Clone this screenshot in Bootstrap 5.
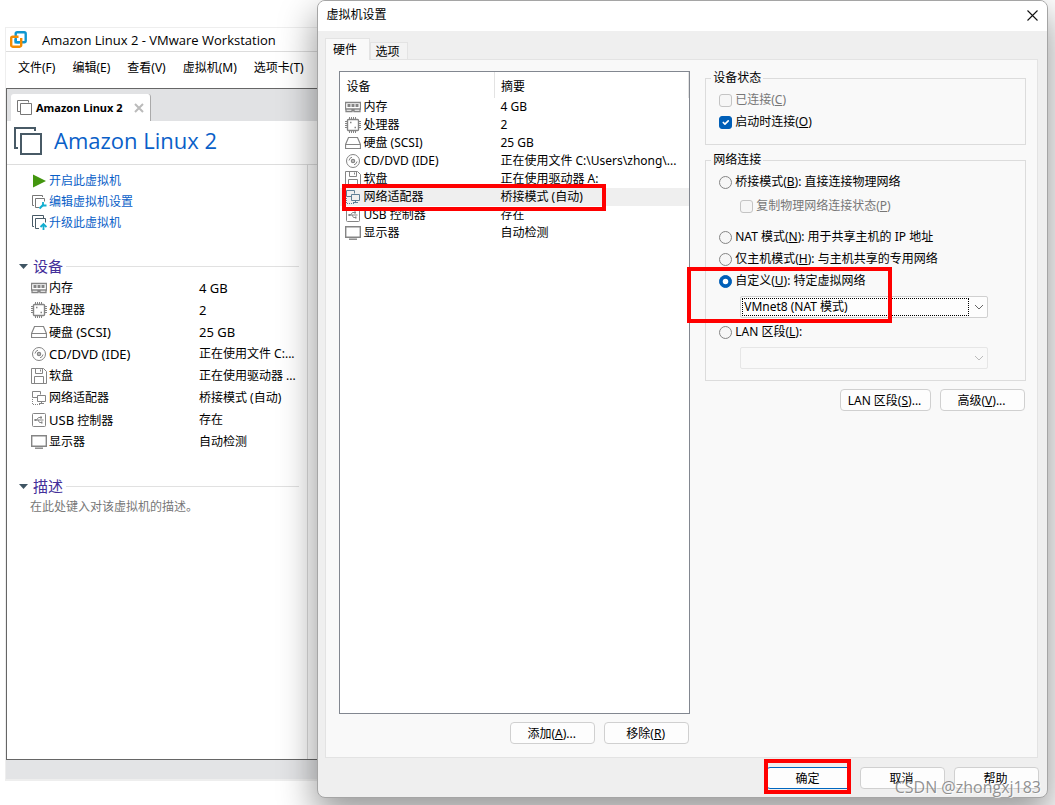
<!DOCTYPE html>
<html lang="zh-CN">
<head>
<meta charset="utf-8">
<meta name="viewport" content="width=device-width, initial-scale=1">
<title>虚拟机设置</title>
<link href="https://cdn.jsdelivr.net/npm/bootstrap@5.3.0/dist/css/bootstrap.min.css" rel="stylesheet">
<style>
  body { font: 12px/18px "Noto Sans", "Noto Sans CJK SC", sans-serif; color: #000; background: #fff; }
  .desktop { min-height: 100vh; overflow: hidden; }
  .en { font-size: 13px; }
  svg { flex: none; }
  .ico { width: 16px; height: 16px; fill: none; stroke: #858585; }
  .dev { display: flex; align-items: center; gap: 2px; }

  /* main window */
  .vm-window { flex: 312 0 0; min-width: 0; margin: 27px 0 24px 5px; border: 1px solid #eee; border-width: 1px 0 2px 1px; }
  .vm-title { height: 23px; font: 13px/18px "Open Sans", sans-serif; padding-left: 4px; gap: 15px; }
  .vm-menu { height: 37px; border-top: 1px solid #ddd; padding: 0 0 4px 12px; gap: 17px; }
  .vm-menu a { color: #000; text-decoration: none; }
  .vm-frame { border: 1px solid #666; border-right: 0; }
  .vm-tabs { background: #e1e2e4; height: 32px; padding-left: 4px; }
  .vm-tab { height: 27px; background: #fff; border: 0; border-right: 1px solid #aaa; border-radius: 3px 3px 0 0; padding: 0 6px; gap: 4px; font-size: 11px; font-weight: 700; }
  .vm-head { height: 44px; border-bottom: 1px solid #ddd; padding: 0 0 4px 7px; gap: 12px; color: #0a5fc8; }
  .vm-head h1 { font: 22px/28px "Open Sans", sans-serif; padding-bottom: 2px; }
  .vm-body { margin-right: 9px; border-right: 1px solid #ddd; padding: 5px 8px 0 12px; }
  .vm-link { height: 21px; color: #0a5fc8; text-decoration: none; gap: 2px; padding-left: 12px; }
  .vm-link .ico { stroke: none; }
  .vm-section { height: 22px; margin-top: 22px; gap: 5px; }
  .vm-section h2 { font-size: 15px; font-weight: 400; line-height: 22px; color: #44309a; }
  .vm-section hr { border-color: #888; margin: 0 0 0 -2px; }
  .device-list { table-layout: fixed; width: 100%; }
  .device-list td { padding: 0; height: 22px; white-space: nowrap; }
  .device-list td:first-child { width: 180px; padding-left: 12px; }
  .vm-note { color: #777; padding-left: 11px; line-height: 20px; }
  .vm-status { height: 19px; background: #e3e4e6; }

  /* settings dialog */
  .settings { flex: 730 0 0; min-width: 0; margin: 0 7px 7px 0; border: 1px solid #a5a5a5; border-radius: 8px; background: #efefef; box-shadow: 0 16px 36px 2px rgba(0,0,0,.4); z-index: 1; }
  .settings-title { height: 30px; background: #fff; border-radius: 7px 7px 0 0; padding: 0 9px 2px 8px; }
  .settings-tabs { padding: 7px 0 0 7px; height: 29px; }
  .settings-tab { background: #f3f3f3; border: 1px solid #e3e3e3; border-bottom: 0; height: 18px; padding: 0 8px 0 4px; line-height: 18px; }
  .settings-tab.active { background: #f9f9f9; width: 45px; height: 22px; line-height: 21px; padding: 0 12px 0 6px; }
  .settings-panel { background: #f9f9f9; border: 1px solid #e3e3e3; margin: -1px 9px 0 7px; padding: 11px 11px 13px 13px; gap: 15px; }
  .hw-col { flex: 351 0 0; min-width: 0; }
  .net-col { flex: 321 0 0; min-width: 0; }
  .hw-box { background: #fff; border: 1px solid #828790; }
  .hw-table { table-layout: fixed; width: 100%; }
  .hw-table th { font-weight: 400; height: 26px; padding: 3px 0 0 6px; border-right: 1px solid #e3e3e3; }
  .hw-table th:first-child { width: 154px; }
  .hw-table td { padding: 0 0 0 6px; height: 18px; line-height: 18px; white-space: nowrap; }
  .hw-table td:first-child { padding-left: 5px; }
  .hw-table .chosen { background: #efefef; }
  .hw-table .chosen .ico { stroke: #5f7f96; }
  .btn-line { margin-top: 8px; gap: 9px; padding-right: 1px; }
  .win-btn { --bs-btn-font-size: 12px; --bs-btn-line-height: 18px; --bs-btn-color: #000; --bs-btn-bg: #fdfdfd; --bs-btn-border-color: #d0d0d0; --bs-btn-border-radius: 4px; --bs-btn-hover-bg: #e8f2fb; --bs-btn-hover-border-color: #0067c0; width: 85px; height: 22px; padding: 2px 2px 0 0; }
  .win-btn.wide { width: 91px; }
  .win-btn.ok { --bs-btn-border-color: #0067c0; }
  .win-group { border: 1px solid #dcdcdc; padding: 0 37px 11px 13px; }
  .win-group legend { font-size: 12px; line-height: 14px; margin-left: -8px; padding: 0 2px; }
  .opt { height: 22px; gap: 3px; }
  .opt.sub { margin-top: 2px; margin-bottom: 9px; }
  .opt .form-check-input { width: 13px; height: 13px; border-color: #858585; background-color: #f6f6f6; }
  .opt .form-check-input[type=checkbox] { border-radius: 3px; }
  .opt .form-check-input:checked { background-color: #005fb8; border-color: #005fb8; }
  .opt .form-check-input:disabled { border-color: #c4c4c4; opacity: 1; }
  .opt .off { color: #777; }
  .indent { margin-left: 21px; }
  .pick { margin-top: 4px; margin-bottom: 3px; }
  .win-select { height: 22px; font-size: 12px; line-height: 18px; padding: 1px 20px 1px 3px; border: 1px solid #d0d0d0; border-radius: 2px; color: #000; background-color: #fdfdfd; background-position: right 2px center; background-size: 12px; background-image: url("data:image/svg+xml,%3Csvg xmlns='http://www.w3.org/2000/svg' viewBox='0 0 12 12' fill='none' stroke='%23666'%3E%3Cpath d='M2 4l4 4 4-4'/%3E%3C/svg%3E"); }
  .win-select:disabled { background-color: #f9f9f9; border-color: #e6e6e6; opacity: 1; background-image: url("data:image/svg+xml,%3Csvg xmlns='http://www.w3.org/2000/svg' viewBox='0 0 12 12' fill='none' stroke='%23bbb'%3E%3Cpath d='M2 4l4 4 4-4'/%3E%3C/svg%3E"); }
  .focus-dots { inset: 2px 19px 2px 2px; border: 1px dotted #000; }
  .settings-foot { padding: 9px 8px 8px; gap: 9px; }

  /* annotations */
  .red-box { border: 4px solid #f00; pointer-events: none; z-index: 2; }
  .red-box.row-mark { inset: -4px 83px -5px 2px; }
  .red-box.net-mark { inset: -3px 96px -5px -32px; }
  .red-box.ok-mark { inset: -8px 0 -5px -2px; }
  .watermark { right: 14px; bottom: 8px; font: 16px/20px "Open Sans", sans-serif; color: rgba(110,110,110,.75); z-index: 3; text-shadow: 1px 1px 0 rgba(255,255,255,.7); }
</style>
</head>
<body>
<svg class="d-none" xmlns="http://www.w3.org/2000/svg">
  <symbol id="i-mem" viewBox="0 0 16 16"><path d="M.5 3.500h15v6.500H15v2.500H9v-1H7v1H1V10H.5zM1 10h14" stroke-width="1.300"/><path d="M2.500 6.500h3m1 0h3m1 0h3" stroke-width="3"/></symbol>
  <symbol id="i-cpu" viewBox="0 0 16 16"><rect x="2.500" y="2.500" width="11" height="11" rx="1" stroke-width="1.400"/><path d="M4.500 0v2m2-2v2m2-2v2m2-2v2m-6 12v2m2-2v2m2-2v2m2-2v2M0 4.500h2m-2 2h2m-2 2h2m-2 2h2m12-6h2m-2 2h2m-2 2h2m-2 2h2"/><path d="M5 5.500h1.500M9.500 10.500H11" stroke-width="1.500"/></symbol>
  <symbol id="i-hdd" viewBox="0 0 16 16"><path d="M3.500 2.500h9l3 7v4H.5v-4zM.5 9.500h15" stroke-width="1.200"/></symbol>
  <symbol id="i-cd" viewBox="0 0 16 16"><circle cx="8" cy="8" r="6.500"/><circle cx="8" cy="8" r="1.500" stroke-width="1.500"/><path d="M4 7.500A4 4 0 0 1 7 4.200M12 8.500a4 4 0 0 1-3 3.300"/></symbol>
  <symbol id="i-fdd" viewBox="0 0 16 16"><path d="M.5.5h12l3 3v12H.5zM4.500.5v5h7v-5M9.500 1.500v2M3.500 15.500v-7h9v7"/></symbol>
  <symbol id="i-net" viewBox="0 0 16 16"><path d="M6.500 7.500h-5v-6h8v3M6.500 5.500h8v6h-8zM10.500 11.500v2M8 13.500h5"/><path d="M1.500 9v5.500H10" stroke-dasharray="1 1"/></symbol>
  <symbol id="i-usb" viewBox="0 0 16 16"><rect x="1.500" y="1.500" width="13" height="13" rx="1"/><path d="M3.500 8h9M5.500 8l2-2.500H10M7 8l1.500 2.500H11"/><path d="M3.500 8h2M9 5.500h2M10 10.500h1.500" stroke-width="1.800"/></symbol>
  <symbol id="i-mon" viewBox="0 0 16 16"><path d="M.7 1.700h14.600v10.600H.7z" stroke-width="1.400"/><path d="M4 14.200h8" stroke-width="1.400"/></symbol>
</svg>

<div class="desktop d-flex position-relative">
  <main class="vm-window d-flex flex-column">
    <div class="vm-title d-flex align-items-center">
      <svg width="17" height="17" viewBox="0 0 17 17" fill="none" stroke-width="2.400"><rect x="5.700" y="1.200" width="10" height="10" rx="1.500" stroke="#0f96cf"/><path d="M8.500 5.700H2.700a1.500 1.500 0 0 0-1.500 1.500v7a1.500 1.500 0 0 0 1.500 1.500h7a1.500 1.500 0 0 0 1.500-1.500V7" stroke="#f38b00"/><path d="M5.700 8v3.200h4" stroke="#0f96cf"/></svg>
      <span class="text-nowrap">Amazon Linux 2 - VMware Workstation</span>
    </div>
    <nav class="vm-menu d-flex align-items-center text-nowrap">
      <a href="#">文件(F)</a><a href="#">编辑(E)</a><a href="#">查看(V)</a><a href="#">虚拟机(M)</a><a href="#">选项卡(T)</a>
    </nav>
    <div class="vm-frame flex-grow-1 d-flex flex-column">
      <div class="vm-tabs d-flex align-items-end">
        <button class="vm-tab d-flex align-items-center text-nowrap" type="button">
          <svg width="15" height="15" viewBox="0 0 15 15" fill="none" stroke="#777"><path d="M3 11.500H.5V.5h11v2M3.500 3.500h11v11h-11z"/></svg>
          Amazon Linux 2
          <svg class="ms-2" width="10" height="10" viewBox="0 0 10 10" stroke="#bbb" stroke-width="2"><path d="M1 1l8 8M9 1L1 9"/></svg>
        </button>
      </div>
      <header class="vm-head d-flex align-items-center">
        <svg width="28" height="28" viewBox="0 0 28 28" fill="none" stroke="#485a66" stroke-width="2"><path d="M4 21H1V1h20v3M7 7h20v20H7z"/></svg>
        <h1 class="mb-0 text-nowrap">Amazon Linux 2</h1>
      </header>
      <div class="vm-body flex-grow-1">
        <a class="vm-link d-flex align-items-center" href="#"><svg class="ico" viewBox="0 0 16 16"><path d="M2 1.500L15 8 2 14.500z" fill="#43960f"/></svg>开启此虚拟机</a>
        <a class="vm-link d-flex align-items-center" href="#"><svg class="ico" viewBox="0 0 16 16"><path d="M3 11.500H1.500v-10h10V3M8 13.500H4.500v-9h9v3" stroke="#777"/><path d="M8.500 14.500l4-4" stroke="#12aed0" stroke-width="2.200"/><path d="M12 8v3.500h3.500" stroke="#12aed0" stroke-width="1.800"/></svg>编辑虚拟机设置</a>
        <a class="vm-link d-flex align-items-center" href="#"><svg class="ico" viewBox="0 0 16 16"><path d="M3 11.500H1.500v-11h11V3M8 13.500H4.500v-10h10v4" stroke="#485a66"/><path d="M12.500 15V9.500M9.500 12l3-3 3 3" stroke="#12aed0" stroke-width="1.800"/></svg>升级此虚拟机</a>

        <div class="vm-section d-flex align-items-center">
          <svg width="9" height="5" viewBox="0 0 9 5"><path d="M0 0h9L4.500 5z" fill="#3f5563"/></svg>
          <h2 class="mb-0">设备</h2><hr class="flex-grow-1">
        </div>
        <table class="device-list">
          <tr><td><div class="dev"><svg class="ico"><use href="#i-mem"/></svg><span>内存</span></div></td><td class="en">4 GB</td></tr>
          <tr><td><div class="dev"><svg class="ico"><use href="#i-cpu"/></svg><span>处理器</span></div></td><td class="en">2</td></tr>
          <tr><td><div class="dev"><svg class="ico"><use href="#i-hdd"/></svg><span>硬盘 <span class="en">(SCSI)</span></span></div></td><td class="en">25 GB</td></tr>
          <tr><td><div class="dev"><svg class="ico"><use href="#i-cd"/></svg><span class="en">CD/DVD (IDE)</span></div></td><td>正在使用文件 C:...</td></tr>
          <tr><td><div class="dev"><svg class="ico"><use href="#i-fdd"/></svg><span>软盘</span></div></td><td>正在使用驱动器 ...</td></tr>
          <tr><td><div class="dev"><svg class="ico"><use href="#i-net"/></svg><span>网络适配器</span></div></td><td>桥接模式 (自动)</td></tr>
          <tr><td><div class="dev"><svg class="ico"><use href="#i-usb"/></svg><span><span class="en">USB</span> 控制器</span></div></td><td>存在</td></tr>
          <tr><td><div class="dev"><svg class="ico"><use href="#i-mon"/></svg><span>显示器</span></div></td><td>自动检测</td></tr>
        </table>

        <div class="vm-section d-flex align-items-center">
          <svg width="9" height="5" viewBox="0 0 9 5"><path d="M0 0h9L4.500 5z" fill="#3f5563"/></svg>
          <h2 class="mb-0">描述</h2><hr class="flex-grow-1">
        </div>
        <p class="vm-note mb-0">在此处键入对该虚拟机的描述。</p>
      </div>
    </div>
    <div class="vm-status"></div>
  </main>

  <section class="settings d-flex flex-column" role="dialog" aria-labelledby="dlg-title">
    <div class="settings-title d-flex align-items-center justify-content-between">
      <span id="dlg-title">虚拟机设置</span>
      <button type="button" class="border-0 bg-transparent p-0 d-flex" aria-label="关闭"><svg width="11" height="11" viewBox="0 0 11 11" stroke="#111" stroke-width="1.100"><path d="M.5.5l10 10M10.500.5l-10 10"/></svg></button>
    </div>
    <div class="settings-tabs d-flex align-items-end" role="tablist">
      <button type="button" role="tab" class="settings-tab active position-relative">硬件</button>
      <button type="button" role="tab" class="settings-tab">选项</button>
    </div>
    <div class="settings-panel d-flex flex-grow-1">
      <div class="hw-col d-flex flex-column">
        <div class="hw-box flex-grow-1">
          <table class="hw-table">
            <thead><tr><th>设备</th><th>摘要</th></tr></thead>
            <tbody>
              <tr><td><div class="dev"><svg class="ico"><use href="#i-mem"/></svg><span>内存</span></div></td><td>4 GB</td></tr>
              <tr><td><div class="dev"><svg class="ico"><use href="#i-cpu"/></svg><span>处理器</span></div></td><td>2</td></tr>
              <tr><td><div class="dev"><svg class="ico"><use href="#i-hdd"/></svg><span>硬盘 (SCSI)</span></div></td><td>25 GB</td></tr>
              <tr><td><div class="dev"><svg class="ico"><use href="#i-cd"/></svg><span>CD/DVD (IDE)</span></div></td><td>正在使用文件 C:\Users\zhong\...</td></tr>
              <tr><td><div class="dev"><svg class="ico"><use href="#i-fdd"/></svg><span>软盘</span></div></td><td>正在使用驱动器 A:</td></tr>
              <tr class="chosen position-relative"><td><div class="dev"><svg class="ico"><use href="#i-net"/></svg><span>网络适配器</span></div></td><td>桥接模式 (自动)<span class="red-box row-mark position-absolute"></span></td></tr>
              <tr><td><div class="dev"><svg class="ico"><use href="#i-usb"/></svg><span>USB 控制器</span></div></td><td>存在</td></tr>
              <tr><td><div class="dev"><svg class="ico"><use href="#i-mon"/></svg><span>显示器</span></div></td><td>自动检测</td></tr>
            </tbody>
          </table>
        </div>
        <div class="btn-line d-flex justify-content-end">
          <button type="button" class="btn win-btn">添加(<u>A</u>)...</button>
          <button type="button" class="btn win-btn">移除(<u>R</u>)</button>
        </div>
      </div>

      <div class="net-col">
        <fieldset class="win-group">
          <legend class="float-none w-auto mb-1">设备状态</legend>
          <div class="opt d-flex align-items-center"><input class="form-check-input m-0" type="checkbox" id="c1" disabled><label class="off" for="c1">已连接(<u>C</u>)</label></div>
          <div class="opt d-flex align-items-center"><input class="form-check-input m-0" type="checkbox" id="c2" checked><label for="c2">启动时连接(<u>O</u>)</label></div>
        </fieldset>
        <fieldset class="win-group mt-2">
          <legend class="float-none w-auto mb-1">网络连接</legend>
          <div class="opt d-flex align-items-center"><input class="form-check-input m-0" type="radio" name="net" id="r1"><label for="r1">桥接模式(<u>B</u>): 直接连接物理网络</label></div>
          <div class="opt sub indent d-flex align-items-center"><input class="form-check-input m-0" type="checkbox" id="c3" disabled><label class="off" for="c3">复制物理网络连接状态(<u>P</u>)</label></div>
          <div class="opt d-flex align-items-center"><input class="form-check-input m-0" type="radio" name="net" id="r2"><label class="text-nowrap" for="r2">NAT 模式(<u>N</u>): 用于共享主机的 IP 地址</label></div>
          <div class="opt d-flex align-items-center"><input class="form-check-input m-0" type="radio" name="net" id="r3"><label class="text-nowrap" for="r3">仅主机模式(<u>H</u>): 与主机共享的专用网络</label></div>
          <div class="position-relative">
            <div class="opt d-flex align-items-center"><input class="form-check-input m-0" type="radio" name="net" id="r4" checked><label for="r4">自定义(<u>U</u>): 特定虚拟网络</label></div>
            <div class="indent pick position-relative">
              <select class="form-select win-select" aria-label="特定虚拟网络"><option>VMnet8 (NAT 模式)</option></select>
              <span class="focus-dots position-absolute pe-none"></span>
            </div>
            <span class="red-box net-mark position-absolute"></span>
          </div>
          <div class="opt d-flex align-items-center"><input class="form-check-input m-0" type="radio" name="net" id="r5"><label for="r5">LAN 区段(<u>L</u>):</label></div>
          <div class="indent mt-1"><select class="form-select win-select" aria-label="LAN 区段" disabled></select></div>
        </fieldset>
        <div class="btn-line d-flex justify-content-end">
          <button type="button" class="btn win-btn wide">LAN 区段(<u>S</u>)...</button>
          <button type="button" class="btn win-btn">高级(<u>V</u>)...</button>
        </div>
      </div>
    </div>
    <div class="settings-foot d-flex justify-content-end">
      <div class="position-relative d-flex"><button type="button" class="btn win-btn ok">确定</button><span class="red-box ok-mark position-absolute"></span></div>
      <button type="button" class="btn win-btn">取消</button>
      <button type="button" class="btn win-btn">帮助</button>
    </div>
  </section>
  <div class="watermark position-absolute pe-none">CSDN @zhongxj183</div>
</div>
<script src="https://cdn.jsdelivr.net/npm/bootstrap@5.3.0/dist/js/bootstrap.bundle.min.js"></script>
</body>
</html>
